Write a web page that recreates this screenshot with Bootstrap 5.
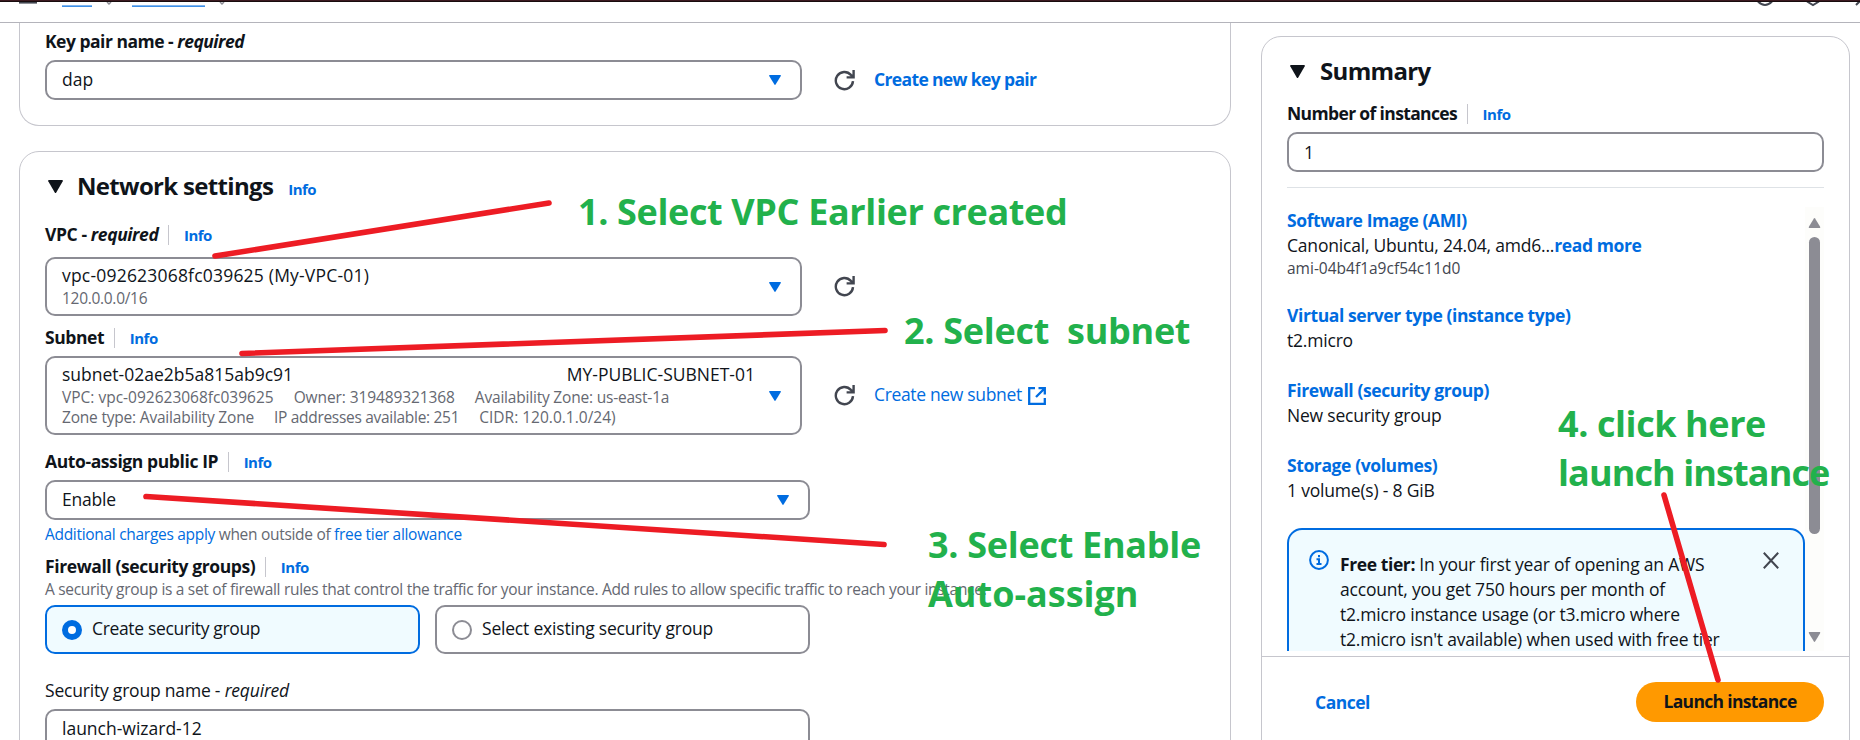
<!DOCTYPE html>
<html lang="en">
<head>
<meta charset="utf-8">
<meta name="viewport" content="width=device-width, initial-scale=1">
<title>Launch an instance</title>
<link href="https://cdn.jsdelivr.net/npm/bootstrap@5.3.0/dist/css/bootstrap.min.css" rel="stylesheet">
<style>
:root{--ink:#0f141a;--sub:#656871;--blue:#006ce0;--line:#c6c6cd;--edge:#8c8c94;--icon:#424650}
html{overflow:hidden}
body{font-family:"Open Sans","Noto Sans",sans-serif;font-size:17.5px;line-height:25px;color:var(--ink);height:740px;overflow:hidden;background:#fff}
a{color:var(--blue);text-decoration:none}
.topbar{height:23px;border-bottom:1px solid #b4b4bb}
.topbar svg{display:block}
.page{height:717px;overflow:hidden}
.main-col{width:1212px;margin-left:19px}
.side-col{width:589px;margin-left:30px;margin-top:13px}
.panel{border:1px solid var(--line);border-radius:20px;background:#fff;padding:19px 25px 0}
.panel-top{border-top:0;border-radius:0 0 20px 20px;padding-top:6px;height:103px}
.panel-net{height:640px;margin-top:25px}
.panel-side{height:760px}
.semi{font-weight:700;letter-spacing:-.4px}
.title{font-size:24px;line-height:30px;font-weight:700;letter-spacing:-.68px;margin:0}
.fine{font-size:15.5px;line-height:20px;letter-spacing:-.3px}
.sub{color:var(--sub)}
.info{font-size:15px;font-weight:700;letter-spacing:-.5px;line-height:20px}
.lbl .info{border-left:1px solid var(--line);padding-left:14.5px;margin-left:10px}
.idtext{letter-spacing:.2px}
.ls-0{letter-spacing:0}
.ls-1{letter-spacing:-.1px}
.ls-2{letter-spacing:-.2px}
.prose{letter-spacing:-.2px}
.snug{letter-spacing:-.34px}
.tight{letter-spacing:-.5px}
.tighter{letter-spacing:-.64px}
.field{border:2px solid var(--edge);border-radius:10px;padding:0 15px;background:#fff}
.field>span{margin-top:-2px}
.w-select{width:757px}
.w-wide{width:765px}
.h-one{height:40px}
.h-vpc{height:59px}
.h-subnet{height:79px}
.h-vpc>div,.h-subnet>div{margin-top:-2px}
.caret{width:12px;height:10px;flex:none;margin-right:4px}
.refresh{width:21px;height:21px;margin-left:32px}
.act{margin-left:19px;margin-top:-2px}
.tile{width:375px;height:49px;border:2px solid var(--edge);border-radius:10px;padding-left:15px}
.tile span:last-child{margin-left:10px;margin-top:-2px}
.tile-on{border-color:var(--blue);background:#f0fbff}
.dot{width:20px;height:20px;border-radius:50%;border:2px solid var(--edge);background:#fff}
.dot-on{border:6px solid var(--blue)}
.scroller{height:444px;margin-top:19px;overflow:hidden}
.scroll-body{width:518px;padding-top:1px}
.rail{width:19px;padding-top:11px;background:#fdfdfb}
.thumb{width:11px;height:297px;border-radius:6px;background:var(--edge);margin-top:9px;margin-bottom:98px}
.notice{border:2px solid var(--blue);border-radius:15px;background:#f0fbff;height:150px;margin-top:1px;padding:20px 0 0 20px}
.panel-foot{border-top:1px solid var(--line);margin:5px -25px 0;padding:25px 25px 0 53px}
.btn-launch{background:#ff9900;color:var(--ink);border:0;border-radius:20px;width:188px;height:40px;font-size:17.5px;line-height:25px;font-weight:700;letter-spacing:-.66px;padding:0 0 2px}
.btn-launch:hover{background:#ff9900}
.strokes{left:0;top:0;pointer-events:none}
.hint{color:#22b14c;font-size:36px;line-height:49px;font-weight:700;white-space:pre;letter-spacing:-.37px}
.hint1{left:578px;top:187px}
.hint2{left:904px;top:306px;letter-spacing:-.3px}
.hint3{left:928px;top:520px;letter-spacing:-.3px}
.hint3 span{letter-spacing:0}
.hint4{left:1558px;top:399px;letter-spacing:-.42px}
.hint4 span{letter-spacing:-.9px}
</style>
</head>
<body class="position-relative">
<svg width="0" height="0" class="position-absolute">
  <symbol id="down" viewBox="0 0 12 10"><path d="M.8 0h10.4q1 0 .6 1L6.6 9.6q-.6.8-1.2 0L.2 1Q-.2 0 .8 0z"/></symbol>
  <symbol id="reload" viewBox="0 0 21 21"><path d="M19 11.2A8.6 8.6 0 1 1 16.9 4.9L19.4 7.2M19.6 0V7.4H12.6" fill="none" stroke="#424650" stroke-width="2.4"/></symbol>
</svg>

<header class="topbar">
  <svg width="1860" height="22">
    <path d="M19 2h18v1.6H19z" fill="#424650"/>
    <path d="M62 5.5h30v1.2H62zM132 5.5h73v1.2h-73z" fill="#006ce0"/>
    <path d="M107 2l2 2 2-2M220 2l2 2 2-2" fill="none" stroke="#8c8c94" stroke-width="1.5"/>
    <path d="M1758 1.5q7 7 14 0M1807 1.5l6 3.5 6-3.5M1860 1l-4 4" fill="none" stroke="#424650" stroke-width="2"/>
    <path d="M0 0h1860v2H0z" fill="#180c0e"/><path d="M0 0h1860v1H0z" fill="#3c1a20"/>
  </svg>
</header>

<div class="page d-flex align-items-start">
  <main class="main-col">
    <section class="panel panel-top">
      <div class="semi tight">Key pair name - <em>required</em></div>
      <div class="d-flex align-items-center" style="margin-top:6px">
        <div class="field w-select h-one d-flex align-items-center justify-content-between"><span>dap</span><svg class="caret" fill="#006ce0"><use href="#down"/></svg></div>
        <svg class="refresh"><use href="#reload"/></svg>
        <a href="#" class="act semi tighter">Create new key pair</a>
      </div>
    </section>

    <section class="panel panel-net">
      <div class="d-flex align-items-center">
        <svg width="15" height="13" viewBox="0 0 12 10" preserveAspectRatio="none" fill="#0f141a" style="margin-left:3px"><use href="#down"/></svg>
        <h2 class="title" style="margin-left:14px">Network settings</h2>
        <a href="#" class="info" style="margin:5px 0 0 15px">Info</a>
      </div>

      <div class="lbl d-flex align-items-center" style="margin-top:21px"><span class="semi">VPC - <em>required</em></span><a href="#" class="info">Info</a></div>
      <div class="d-flex align-items-center" style="margin-top:10px">
        <div class="field w-select h-vpc d-flex align-items-center justify-content-between">
          <div><div class="idtext">vpc-092623068fc039625 (My-VPC-01)</div><div class="fine sub">120.0.0.0/16</div></div>
          <svg class="caret" fill="#006ce0"><use href="#down"/></svg>
        </div>
        <svg class="refresh"><use href="#reload"/></svg>
      </div>

      <div class="lbl d-flex align-items-center" style="margin-top:9px"><span class="semi">Subnet</span><a href="#" class="info">Info</a></div>
      <div class="d-flex align-items-center" style="margin-top:6px">
        <div class="field w-select h-subnet d-flex align-items-center">
          <div style="width:693px">
            <div class="d-flex justify-content-between"><span class="ls-0">subnet-02ae2b5a815ab9c91</span><span class="ls-0">MY-PUBLIC-SUBNET-01</span></div>
            <div class="fine sub d-flex" style="gap:20px"><span class="ls-0">VPC: vpc-092623068fc039625</span><span class="ls-1">Owner: 319489321368</span><span class="ls-2">Availability Zone: us-east-1a</span></div>
            <div class="fine sub d-flex" style="gap:20px"><span class="ls-2">Zone type: Availability Zone</span><span>IP addresses available: 251</span><span class="ls-0">CIDR: 120.0.1.0/24)</span></div>
          </div>
          <svg class="caret ms-auto" fill="#006ce0"><use href="#down"/></svg>
        </div>
        <svg class="refresh"><use href="#reload"/></svg>
        <a href="#" class="act snug">Create new subnet</a>
        <svg width="18" height="18" viewBox="0 0 18 18" fill="none" stroke="#006ce0" stroke-width="2.3" style="margin-left:6px"><path d="M7 1.2H1.2v15.6h15.6V11M10.5 1.2h6.3v6.3M16.5 1.5L8 10"/></svg>
      </div>

      <div class="lbl d-flex align-items-center" style="margin-top:14px"><span class="semi">Auto-assign public IP</span><a href="#" class="info">Info</a></div>
      <div class="field w-wide h-one d-flex align-items-center justify-content-between" style="margin-top:6px"><span class="prose">Enable</span><svg class="caret" fill="#006ce0"><use href="#down"/></svg></div>
      <div class="fine sub" style="margin-top:4px"><a href="#">Additional charges apply</a> when outside of <a href="#">free tier allowance</a></div>

      <div class="lbl d-flex align-items-center" style="margin-top:10px"><span class="semi">Firewall (security groups)</span><a href="#" class="info">Info</a></div>
      <div class="fine sub text-nowrap">A security group is a set of firewall rules that control the traffic for your instance. Add rules to allow specific traffic to reach your instance.</div>
      <div class="d-flex" style="margin-top:6px;gap:15px">
        <label class="tile tile-on d-flex align-items-center"><span class="dot dot-on"></span><span class="snug">Create security group</span></label>
        <label class="tile d-flex align-items-center"><span class="dot"></span><span class="prose">Select existing security group</span></label>
      </div>

      <div class="prose" style="margin-top:24px">Security group name - <em>required</em></div>
      <div class="field w-wide h-one d-flex align-items-center" style="margin-top:6px"><span>launch-wizard-12</span></div>
    </section>
  </main>

  <aside class="side-col">
    <section class="panel panel-side">
      <div class="d-flex align-items-center">
        <svg width="15" height="13" viewBox="0 0 12 10" preserveAspectRatio="none" fill="#0f141a" style="margin-left:3px"><use href="#down"/></svg>
        <h2 class="title" style="margin-left:15px">Summary</h2>
      </div>
      <div class="lbl d-flex align-items-center" style="margin-top:15px"><span class="semi tighter">Number of instances</span><a href="#" class="info">Info</a></div>
      <div class="field h-one d-flex align-items-center" style="margin-top:6px"><span class="mt-0">1</span></div>
      <div class="border-bottom" style="height:16px"></div>

      <div class="scroller d-flex">
        <div class="scroll-body">
          <div style="margin-bottom:25px">
            <a href="#" class="semi">Software Image (AMI)</a>
            <div class="prose">Canonical, Ubuntu, 24.04, amd6...<a href="#" class="semi">read more</a></div>
            <div class="fine ls-0" style="color:#424650">ami-04b4f1a9cf54c11d0</div>
          </div>
          <div style="margin-bottom:25px"><a href="#" class="semi">Virtual server type (instance type)</a><div class="prose">t2.micro</div></div>
          <div style="margin-bottom:25px"><a href="#" class="semi">Firewall (security group)</a><div class="prose">New security group</div></div>
          <div style="margin-bottom:25px"><a href="#" class="semi">Storage (volumes)</a><div class="prose">1 volume(s) - 8 GiB</div></div>
          <div class="notice d-flex align-items-start">
            <svg width="20" height="20" viewBox="0 0 20 20" fill="none" stroke="#006ce0" stroke-width="2"><circle cx="10" cy="10" r="8.9"/><path d="M10 5v2.2M7.5 9.2H10V14M7.5 14h5"/></svg>
            <div class="prose text-nowrap" style="margin-left:11px;margin-top:2px;width:423px"><b class="semi">Free tier:</b> In your first year of opening an AWS<br>account, you get 750 hours per month of<br>t2.micro instance usage (or t3.micro where<br>t2.micro isn't available) when used with free tier</div>
            <svg width="16" height="17" viewBox="0 0 16 17" fill="none" stroke="#424650" stroke-width="2" style="margin-top:2px"><path d="M.8.8l14.4 15.4M15.2.8L.8 16.2"/></svg>
          </div>
        </div>
        <div class="rail d-flex flex-column align-items-center">
          <svg width="13" height="10" viewBox="0 0 12 10" fill="#8c8c94" style="transform:rotate(180deg)"><use href="#down"/></svg>
          <div class="thumb"></div>
          <svg width="13" height="10" viewBox="0 0 12 10" fill="#8c8c94"><use href="#down"/></svg>
        </div>
      </div>

      <div class="panel-foot d-flex align-items-center justify-content-between">
        <a href="#" class="semi tight">Cancel</a>
        <button class="btn btn-launch">Launch instance</button>
      </div>
    </section>
  </aside>
</div>

<!-- walkthrough annotations -->
<svg class="strokes position-absolute" width="1860" height="740" stroke="#ed1c24" stroke-width="5.6" stroke-linecap="round">
  <path d="M215 256L549 203M242 353.500L885 330.500M146 496.500L884 544.500M1664 495L1718 680"/>
</svg>
<div class="hint hint1 position-absolute">1. Select VPC Earlier created</div>
<div class="hint hint2 position-absolute">2. Select  subnet</div>
<div class="hint hint3 position-absolute">3. Select Enable
<span>Auto-assign</span></div>
<div class="hint hint4 position-absolute">4. click here
<span>launch instance</span></div>
<script src="https://cdn.jsdelivr.net/npm/bootstrap@5.3.0/dist/js/bootstrap.bundle.min.js"></script>
</body>
</html>
